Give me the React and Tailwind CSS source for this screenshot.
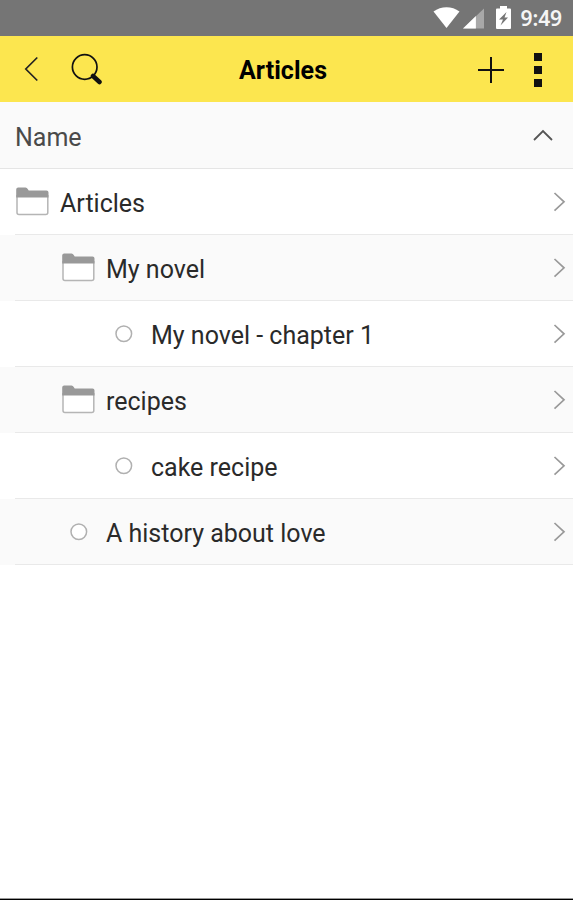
const rows = [
  { label: 'Articles', type: 'folder', indent: 'pl-[15px]' },
  { label: 'My novel', type: 'folder', indent: 'pl-[61px]' },
  { label: 'My novel - chapter 1', type: 'item', indent: 'pl-[106px]' },
  { label: 'recipes', type: 'folder', indent: 'pl-[61px]' },
  { label: 'cake recipe', type: 'item', indent: 'pl-[106px]' },
  { label: 'A history about love', type: 'item', indent: 'pl-[61px]' },
];

function StatusBar() {
  return (
    <div className="flex h-9 items-center justify-end bg-[#757575] pr-[11px]">
      <svg className="mr-[3px]" width="27" height="22" viewBox="0 0 27 22">
        <path d="M0.5 4.5C8-1.2 19-1.2 26.5 4.5L13.5 21Z" fill="#fff" />
      </svg>
      <svg className="mr-[12px]" width="21" height="21" viewBox="0 0 22 21">
        <path d="M22 0V21H0Z" fill="#a8a8a8" />
        <path d="M13.5 8V21H0Z" fill="#fff" />
      </svg>
      <svg className="mr-[10px] -mt-0.5" width="15" height="23" viewBox="0 0 15 23">
        <path d="M4 0h7v2.500H14q1 0 1 1V22q0 1-1 1H1q-1 0-1-1V3.500q0-1 1-1h3Z" fill="#fff" />
        <path d="M10.500 6L3 13.500h4L4.500 19.500L12 11.500H8.500Z" fill="#757575" />
      </svg>
      <span className="font-['Noto_Sans'] text-[21px] leading-9 font-semibold tracking-[-0.100px] text-[#f5f5f5]">9:49</span>
    </div>
  );
}

function Toolbar() {
  return (
    <div className="flex h-[66px] items-center bg-[#fce64f] pt-px">
      <div className="flex w-[239px] items-center pl-6">
        <svg className="-mt-px" width="15" height="26" viewBox="0 0 15 26" fill="none" stroke="#222" strokeWidth="1.700">
          <path d="M13.300 1.500L1.800 13L13.300 24.500" />
        </svg>
        <svg className="-mt-px ml-8" width="32" height="32" viewBox="0 0 32 32" fill="none" stroke="#111">
          <circle cx="13.700" cy="14" r="12.300" strokeWidth="1.700" />
          <path d="M22 23L28.500 29" strokeWidth="4.500" strokeLinecap="round" />
        </svg>
      </div>
      <h1 className="pt-[3px] text-[25px] leading-8 font-bold tracking-[0.05px] text-black">Articles</h1>
      <div className="ml-auto flex items-center pr-[31px]">
        <svg width="28" height="28" viewBox="0 0 28 28" stroke="#111" strokeWidth="2">
          <path d="M14 1V27M1 14H27" />
        </svg>
        <div className="ml-[29px] flex flex-col gap-[5px]">
          <i className="block size-2 bg-[#111]" />
          <i className="block size-2 bg-[#111]" />
          <i className="block size-2 bg-[#111]" />
        </div>
      </div>
    </div>
  );
}

function FolderIcon() {
  return (
    <svg className="mr-[11px] -mt-px" width="34" height="29" viewBox="0 0 34 29">
      <path d="M2 8V25.500q0 2 2 2H30.800q2 0 2-2V8" fill="#fff" stroke="#b5b5b5" strokeWidth="1.500" />
      <path d="M1.200 10.500V2.500q0-2 2-2H10.500q1.500 0 2.200 1.500L13.700 3.500H31.500q2 0 2 2V10.500Z" fill="#999" />
    </svg>
  );
}

function CircleIcon() {
  return (
    <svg className="ml-[9px] mr-[18px]" width="18" height="18" viewBox="0 0 18 18">
      <circle cx="8.800" cy="8.800" r="7.800" fill="#fff" stroke="#b0b0b0" strokeWidth="1.500" />
    </svg>
  );
}

function Row({ label, type, indent }) {
  return (
    <li className="h-[66px] odd:bg-white even:bg-[#fafafa]">
      <div className="flex h-full flex-col">
        <div className={`flex flex-1 items-center pr-[7px] ${indent}`}>
          {type === 'folder' ? <FolderIcon /> : <CircleIcon />}
          <span className="pt-[5px] text-[25px] leading-8 text-[#2a2a2a]">{label}</span>
          <svg className="ml-auto" width="13" height="20" viewBox="0 0 13 20" fill="none" stroke="#999" strokeWidth="1.700">
            <path d="M1.500 1L11 9.800L1.500 18.600" />
          </svg>
        </div>
        <div className="ml-[15px] h-px bg-[#e9e9e9]" />
      </div>
    </li>
  );
}

export default function App() {
  return (
    <div className="flex h-[900px] w-[573px] flex-col overflow-hidden bg-white font-[Roboto,sans-serif]">
      <StatusBar />
      <Toolbar />
      <div className="flex h-[67px] items-center border-b border-[#e5e5e5] bg-[#fafafa] pr-5 pl-[15px]">
        <span className="pt-[5px] text-[25px] leading-8 text-[#4a4a4a]">Name</span>
        <svg className="ml-auto" width="20" height="12" viewBox="0 0 20 12" fill="none" stroke="#555" strokeWidth="1.800">
          <path d="M1 11L10 2L19 11" />
        </svg>
      </div>
      <ul>
        {rows.map((row) => (
          <Row key={row.label} {...row} />
        ))}
      </ul>
      <div className="mt-auto h-[2px] border-t border-[#999] bg-black" />
    </div>
  );
}
